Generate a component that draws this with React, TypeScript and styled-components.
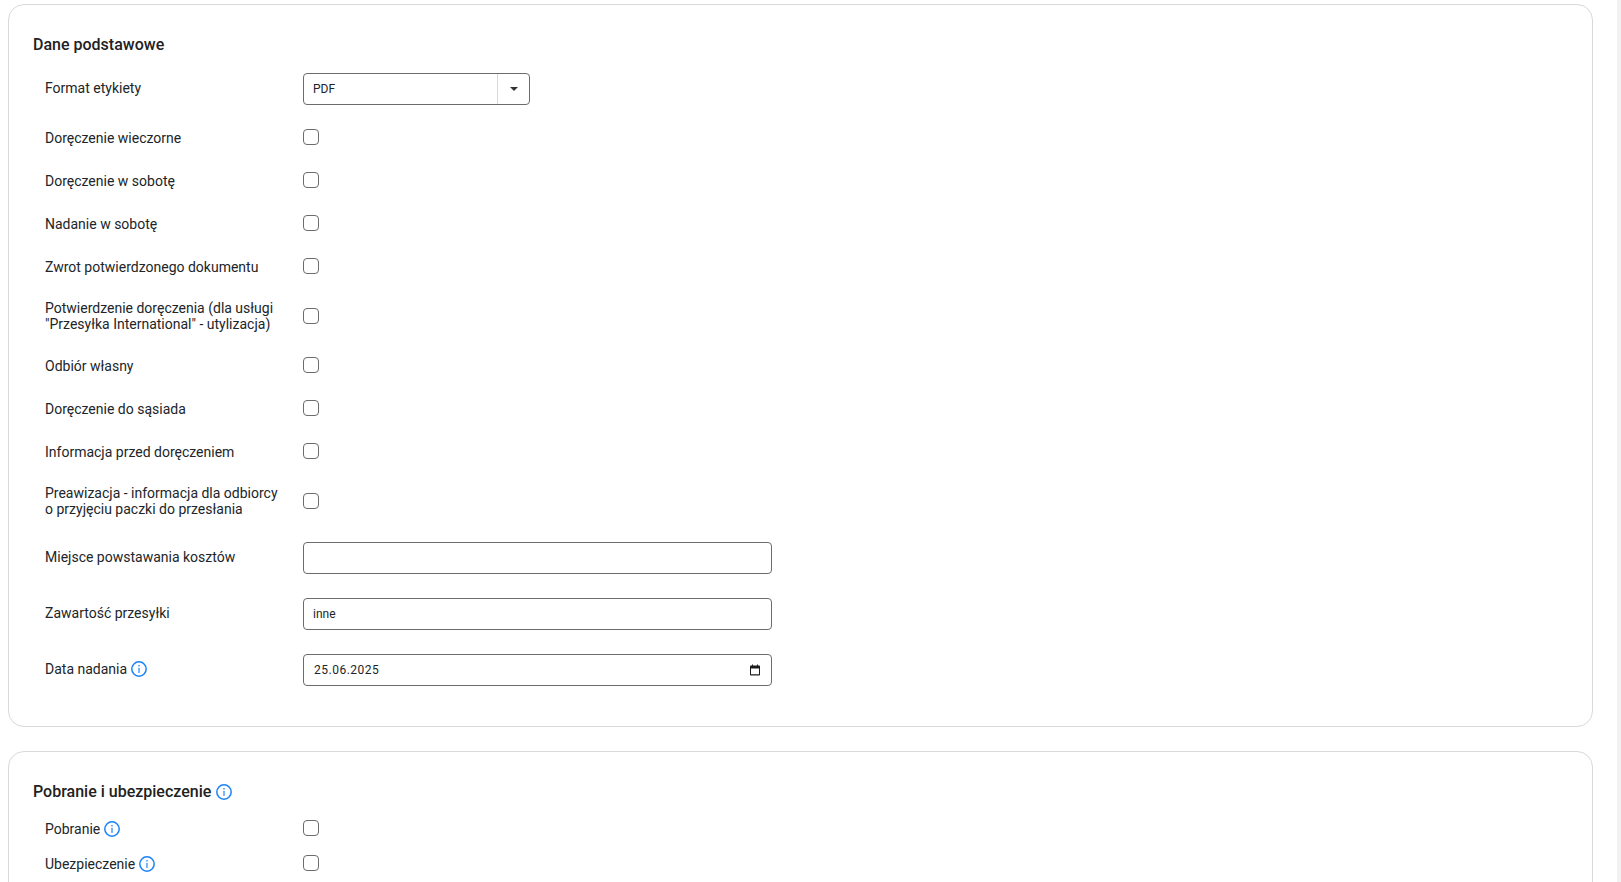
import React from 'react';
import styled, { createGlobalStyle } from 'styled-components';

const GlobalStyle = createGlobalStyle`
  html, body {
    margin: 0;
    height: 882px;
    overflow: hidden;
    background: #fff;
  }

  body {
    font-family: Roboto, "Liberation Sans", sans-serif;
    color: #212529;
  }
`;

const InfoIcon = () => (
  <Info viewBox='0 0 16 16' aria-hidden='true'>
    <circle cx='8' cy='8' r='7.2' fill='none' stroke='#1a82f7' strokeWidth='1.5' />
    <circle cx='8' cy='4.7' r='0.9' fill='#4a9cf9' />
    <rect x='7.25' y='6.8' width='1.5' height='5.2' rx='0.4' fill='#4a9cf9' />
  </Info>
);

const CalendarIcon = () => (
  <svg width='12' height='12' viewBox='0 0 12 12' aria-hidden='true'>
    <path d='M3 0.5h1v1h4v-1h1v1h1.2c.5 0 .8.4.8.8v8.4c0 .5-.4.8-.8.8H1.800c-.5 0-.8-.4-.8-.8V2.300c0-.5.4-.8.8-.8H3z M2 4.500v5.800h8V4.500z' fill='#1c1c1c' fillRule='evenodd' />
  </svg>
);

const checkboxRows = [
  'Doręczenie wieczorne',
  'Doręczenie w sobotę',
  'Nadanie w sobotę',
  'Zwrot potwierdzonego dokumentu',
];

const deliveryRows = [
  'Odbiór własny',
  'Doręczenie do sąsiada',
  'Informacja przed doręczeniem',
];

const App = () => {
  return (
    <Page>
      <GlobalStyle />
      <Content>
        <Card>
          <Heading>Dane podstawowe</Heading>

          <FieldRow $after={19}>
            <FieldLabel>Format etykiety</FieldLabel>
            <Select>
              <SelectValue>PDF</SelectValue>
              <SelectArrow>
                <Caret />
              </SelectArrow>
            </Select>
          </FieldRow>

          {checkboxRows.map(text => (
            <CheckRow key={text}>
              <CheckLabel>{text}</CheckLabel>
              <Checkbox type='checkbox' />
            </CheckRow>
          ))}

          <CheckRow $tall>
            <Label>
              Potwierdzenie doręczenia (dla usługi "Przesyłka International" -
              utylizacja)
            </Label>
            <Checkbox type='checkbox' />
          </CheckRow>

          {deliveryRows.map(text => (
            <CheckRow key={text}>
              <CheckLabel>{text}</CheckLabel>
              <Checkbox type='checkbox' />
            </CheckRow>
          ))}

          <CheckRow $tall $after={22}>
            <Label>
              Preawizacja - informacja dla odbiorcy o przyjęciu paczki do
              przesłania
            </Label>
            <Checkbox type='checkbox' />
          </CheckRow>

          <FieldRow>
            <FieldLabel>Miejsce powstawania kosztów</FieldLabel>
            <TextInput type='text' defaultValue='' />
          </FieldRow>

          <FieldRow>
            <FieldLabel>Zawartość przesyłki</FieldLabel>
            <TextInput type='text' defaultValue='inne' />
          </FieldRow>

          <FieldRow $after={0}>
            <FieldLabel>
              Data nadania <InfoIcon />
            </FieldLabel>
            <DateField>
              <DateValue>25.06.2025</DateValue>
              <CalendarIcon />
            </DateField>
          </FieldRow>
        </Card>

        <LastCard>
          <LastHeading>
            Pobranie i ubezpieczenie <InfoIcon />
          </LastHeading>

          <ShortRow>
            <CheckLabel>
              Pobranie <InfoIcon />
            </CheckLabel>
            <Checkbox type='checkbox' />
          </ShortRow>

          <ShortRow>
            <CheckLabel>
              Ubezpieczenie <InfoIcon />
            </CheckLabel>
            <Checkbox type='checkbox' />
          </ShortRow>
        </LastCard>
      </Content>
      <ScrollTrack />
    </Page>
  );
};

const Page = styled.div`
  display: flex;
  height: 882px;
  overflow: hidden;
`;

const Content = styled.main`
  flex: 1;
  min-width: 0;
  padding: 4px 24px 0 8px;
`;

const ScrollTrack = styled.div`
  width: 4px;
  background: #f1f1f1;
`;

const Card = styled.section`
  box-sizing: border-box;
  height: 723px;
  margin-bottom: 24px;
  padding: 28px 24px 0;
  background: #fff;
  border: 1px solid #d9d9d9;
  border-radius: 16px;
`;

const LastCard = styled(Card)`
  height: 400px;
  margin-bottom: 0;
`;

const Heading = styled.h2`
  display: flex;
  align-items: center;
  gap: 4px;
  height: 24px;
  margin: 0 0 16px;
  font-size: 16px;
  font-weight: 500;
  line-height: 24px;
  color: #212121;
`;

const LastHeading = styled(Heading)`
  gap: 5px;
  margin-bottom: 11px;
`;

const Row = styled.div<{ $after?: number }>`
  display: flex;
  align-items: center;
  margin-bottom: ${({ $after }) => $after ?? 17}px;
  padding-left: 12px;
`;

const FieldRow = styled(Row)`
  height: 32px;
  margin-bottom: ${({ $after }) => $after ?? 24}px;
`;

const CheckRow = styled(Row)<{ $tall?: boolean }>`
  height: ${({ $tall }) => ($tall ? 39 : 26)}px;
`;

const ShortRow = styled(Row)`
  height: 26px;
  margin-bottom: 9px;
`;

const Label = styled.label`
  display: flex;
  flex-wrap: wrap;
  align-items: center;
  column-gap: 4px;
  flex: none;
  width: 240px;
  margin-right: 18px;
  font-size: 14px;
  line-height: 16px;
  color: #212529;
`;

const FieldLabel = styled(Label)`
  padding-bottom: 2px;
`;

const CheckLabel = styled(Label)`
  padding-top: 2px;
`;

const Info = styled.svg`
  flex: none;
  width: 16px;
  height: 16px;
`;

const Checkbox = styled.input`
  appearance: none;
  flex: none;
  width: 16px;
  height: 16px;
  margin: 0;
  background: #fff;
  border: 1px solid #6c6c6c;
  border-radius: 4px;
`;

const fieldBox = `
  box-sizing: border-box;
  height: 32px;
  background: #fff;
  border: 1px solid #6c6c6c;
  border-radius: 4px;
  font-family: Roboto, "Liberation Sans", sans-serif;
  font-size: 12px;
  color: #212529;
`;

const TextInput = styled.input`
  ${fieldBox}
  width: 469px;
  padding: 0 9px;
  outline: none;
`;

const Select = styled.div`
  ${fieldBox}
  display: flex;
  align-items: stretch;
  width: 227px;
`;

const SelectValue = styled.span`
  flex: 1;
  padding-left: 9px;
  line-height: 30px;
`;

const SelectArrow = styled.span`
  display: flex;
  align-items: center;
  justify-content: center;
  width: 31px;
  border-left: 1px solid #d9d9d9;
`;

const Caret = styled.span`
  width: 0;
  height: 0;
  border-top: 4px solid #333;
  border-left: 4px solid transparent;
  border-right: 4px solid transparent;
`;

const DateField = styled.div`
  ${fieldBox}
  display: flex;
  align-items: center;
  justify-content: space-between;
  width: 469px;
  padding: 0 10px;
`;

const DateValue = styled.span`
  letter-spacing: 0.5px;
`;

export default App;
